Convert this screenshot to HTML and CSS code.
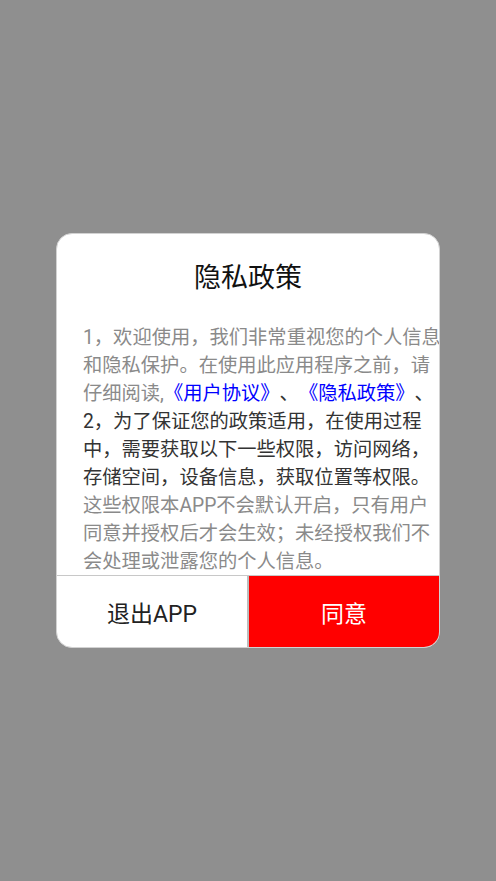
FILE: index.html
```html
<!DOCTYPE html>
<html lang="zh-CN">
<head>
<meta charset="utf-8">
<title>隐私政策</title>
<link rel="stylesheet" href="styles.css">
</head>
<body>
<div class="dialog">
  <div class="title">隐私政策</div>
  <div class="content">
    <div class="text"><span class="muted">1，欢迎使用，我们非常重视您的个人信息和隐私保护。在使用此应用程序之前，请仔细阅读,</span><span class="link">《用户协议》</span><span class="dark">、</span><span class="link">《隐私政策》</span><span class="dark">、</span><br><span class="dark">2，为了保证您的政策适用，在使用过程中，需要获取以下一些权限，访问网络，存储空间，设备信息，获取位置等权限。</span><br><span class="muted">这些权限本APP不会默认开启，只有用户同意并授权后才会生效；未经授权我们不会处理或泄露您的个人信息。</span></div>
  </div>
  <div class="actions">
    <div class="btn btn-exit">退出APP</div>
    <div class="btn btn-agree">同意</div>
  </div>
</div>
</body>
</html>
```

FILE: styles.css
```css
html, body {
  margin: 0;
  padding: 0;
}
body {
  background: #8f8f8f;
  height: 881px;
  display: flex;
  align-items: center;
  justify-content: center;
  font-family: Roboto, "Noto Sans CJK SC", sans-serif;
}
.dialog {
  box-sizing: border-box;
  width: 384px;
  height: 415px;
  background: #ffffff;
  border: 1px solid #d2d2d2;
  border-radius: 16px;
  overflow: hidden;
  display: flex;
  flex-direction: column;
}
.title {
  padding-top: 26px;
  height: 36px;
  line-height: 36px;
  text-align: center;
  font-size: 27px;
  color: #111111;
}
.content {
  margin-top: 28px;
  padding-left: 26px;
  height: 251px;
  overflow: hidden;
}
.text {
  width: 361px;
  font-size: 19.3px;
  line-height: 28px;
  text-spacing-trim: space-all;
}
.muted { color: #8a8a8a; }
.dark { color: #333333; }
.link { color: #0000ff; }
.actions {
  flex: 1;
  display: flex;
  border-top: 1px solid #c8c8c8;
}
.btn {
  display: flex;
  align-items: center;
  justify-content: center;
  font-size: 23px;
}
.btn-exit {
  width: 190px;
  color: #222222;
  border-right: 2px solid #bdbdbd;
}
.btn-agree {
  flex: 1;
  background: #ff0000;
  color: #ffffff;
}
```
